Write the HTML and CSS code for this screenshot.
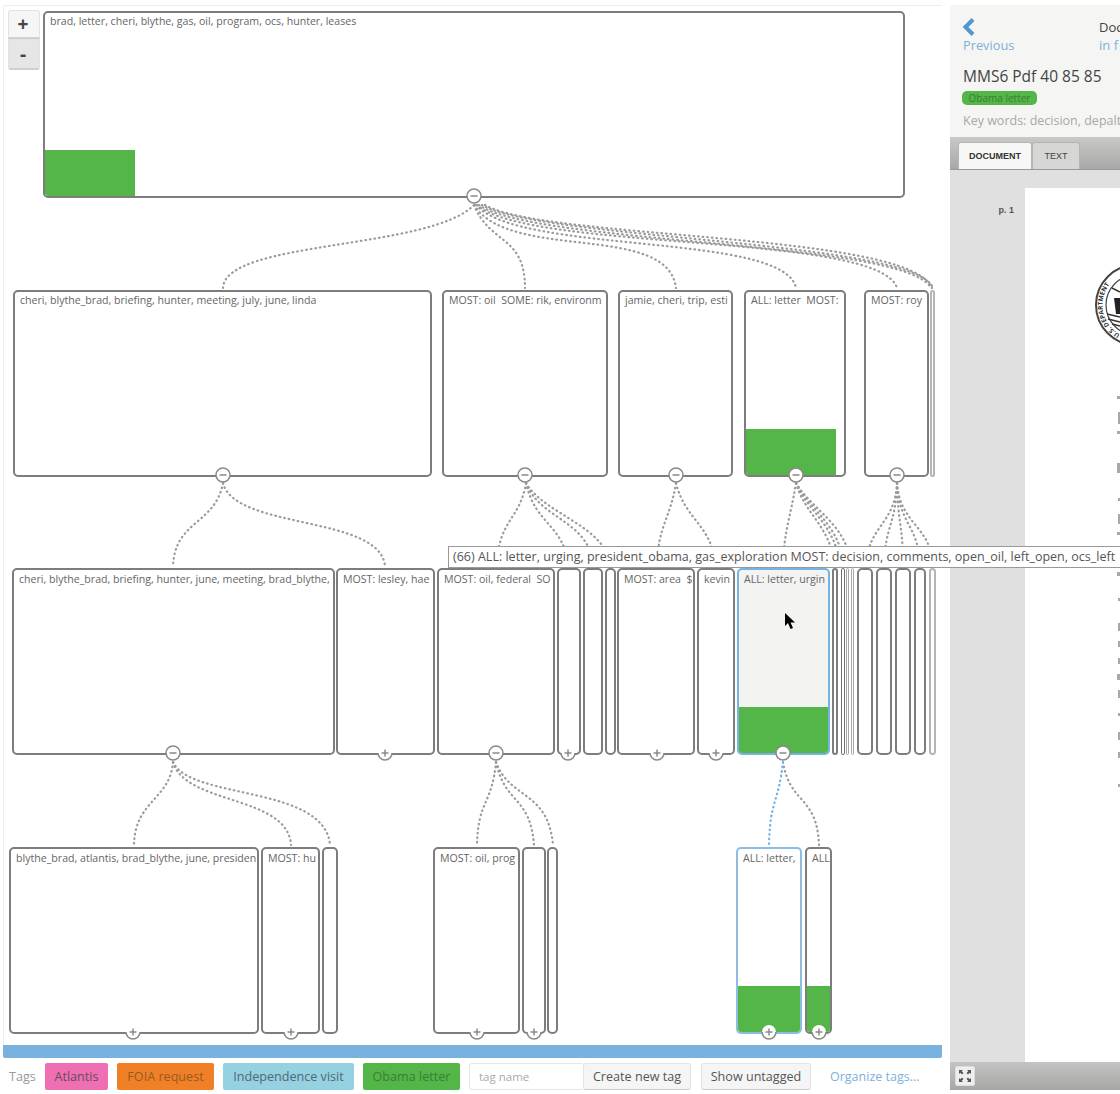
FILE: index.html
```html
<!DOCTYPE html>
<html lang="en">
<head>
    <meta charset="UTF-8">
    <title>Document tree</title>
    <link rel="stylesheet" href="styles.css">
</head>
<body>
<div class="app">
    <div class="left">
        <div class="tree">
            <div class="zoom-btns">
                <button class="zoom-btn" type="button">+</button>
                <button class="zoom-btn zoom-out" type="button">-</button>
            </div>

            <!-- svg uses page coordinates -->
            <svg class="links" width="939" height="1040" viewBox="3 5 939 1040">
                <g class="link">
                    <path d="M474 205 C430 250 225 240 223 288"/>
                    <path d="M474 205 C490 245 525 235 525 288"/>
                    <path d="M474 205 C510 262 668 222 676 288"/>
                    <path d="M476 205 C520 255 785 232 796 288"/>
                    <path d="M477 205 C530 252 880 232 897 288"/>
                    <path d="M479 205 C535 245 905 240 931 288"/>
                    <path d="M482 205 C540 240 915 240 933 288"/>
                    <path d="M485 205 C545 240 910 232 932 288"/>

                    <path d="M223 483 C215 525 175 520 173 566"/>
                    <path d="M223 483 C235 530 380 515 385 566"/>
                    <path d="M526 483 C520 520 498 520 497 566"/>
                    <path d="M526 483 C535 525 565 525 568 566"/>
                    <path d="M526 483 C540 520 590 520 593 566"/>
                    <path d="M526 483 C545 515 605 525 611 566"/>
                    <path d="M676 483 C670 520 658 525 657 566"/>
                    <path d="M676 483 C685 520 712 525 716 566"/>
                    <path d="M796 483 C790 520 784 530 783 566"/>
                    <path d="M796 483 C805 515 830 525 835 566"/>
                    <path d="M796 483 C808 512 836 525 840 566"/>
                    <path d="M796 483 C810 510 840 525 844 566"/>
                    <path d="M796 483 C812 510 848 525 851 566"/>
                    <path d="M897 483 C895 525 868 525 866 566"/>
                    <path d="M897 483 C896 525 885 525 884 566"/>
                    <path d="M897 483 C898 525 903 525 903 566"/>
                    <path d="M897 483 C899 525 919 525 920 566"/>
                    <path d="M897 483 C900 525 931 525 933 566"/>

                    <path d="M173 762 C170 800 135 800 134 845"/>
                    <path d="M173 762 C185 805 288 795 291 845"/>
                    <path d="M173 762 C190 800 325 785 330 845"/>
                    <path d="M496 762 C492 805 478 800 477 845"/>
                    <path d="M496 762 C505 805 530 795 534 845"/>
                    <path d="M496 762 C510 800 548 790 553 845"/>
                    <path d="M783 762 C790 805 817 795 819 845"/>
                </g>
                <path class="link-active" d="M783 762 C778 805 770 800 769 845"/>
            </svg>

            <div class="level level-0">
                <div class="node" style="left:41px;width:862px"><span class="label">brad, letter, cheri, blythe, gas, oil, program, ocs, hunter, leases</span><div class="fill" style="width:90px"></div></div>
            </div>

            <div class="level level-1">
                <div class="node" style="left:11px;width:419px"><span class="label">cheri, blythe_brad, briefing, hunter, meeting, july, june, linda</span></div>
                <div class="node" style="left:440px;width:166px"><span class="label">MOST: oil  SOME: rik, environm</span></div>
                <div class="node" style="left:616px;width:115px"><span class="label">jamie, cheri, trip, esti</span></div>
                <div class="node" style="left:742px;width:102px"><span class="label">ALL: letter  MOST:</span><div class="fill" style="width:90px"></div></div>
                <div class="node" style="left:862px;width:65px"><span class="label">MOST: roy</span></div>
                <div class="node sliver" style="left:928px;width:5px"></div>
            </div>

            <div class="level level-2">
                <div class="node" style="left:10px;width:323px"><span class="label">cheri, blythe_brad, briefing, hunter, june, meeting, brad_blythe,</span></div>
                <div class="node" style="left:334px;width:99px"><span class="label">MOST: lesley, hae</span></div>
                <div class="node" style="left:435px;width:118px"><span class="label">MOST: oil, federal  SO</span></div>
                <div class="node" style="left:555px;width:24px"></div>
                <div class="node" style="left:581px;width:20px"></div>
                <div class="node" style="left:603px;width:11px"></div>
                <div class="node" style="left:615px;width:78px"><span class="label">MOST: area  $</span></div>
                <div class="node" style="left:695px;width:38px"><span class="label">kevin</span></div>
                <div class="node selected" style="left:735px;width:93px"><span class="label">ALL: letter, urgin</span><div class="fill" style="width:100%"></div></div>
                <div class="node" style="left:830px;width:6px"></div>
                <div class="node thin dark" style="left:839px;width:4px"></div>
                <div class="node thin" style="left:844px;width:3px"></div>
                <div class="node thin" style="left:849px;width:3px"></div>
                <div class="node" style="left:855px;width:16px"></div>
                <div class="node" style="left:874px;width:16px"></div>
                <div class="node" style="left:893px;width:16px"></div>
                <div class="node" style="left:912px;width:12px"></div>
                <div class="node sliver" style="left:927px;width:7px"></div>
            </div>

            <div class="level level-3">
                <div class="node" style="left:7px;width:250px"><span class="label">blythe_brad, atlantis, brad_blythe, june, presiden</span></div>
                <div class="node" style="left:259px;width:59px"><span class="label">MOST: hu</span></div>
                <div class="node" style="left:320px;width:16px"></div>
                <div class="node" style="left:431px;width:87px"><span class="label">MOST: oil, prog</span></div>
                <div class="node" style="left:520px;width:24px"></div>
                <div class="node" style="left:545px;width:11px"></div>
                <div class="node selected-child" style="left:734px;width:66px"><span class="label">ALL: letter,</span><div class="fill" style="width:100%"></div></div>
                <div class="node" style="left:803px;width:27px"><span class="label">ALL</span><div class="fill" style="width:100%"></div></div>
            </div>

            <svg class="toggles" width="939" height="1040" viewBox="3 5 939 1040">
                <defs>
                    <g id="minus">
                        <circle r="7"/>
                        <path d="M-3.5 0H3.5"/>
                    </g>
                    <g id="plus">
                        <circle class="plain" r="7"/>
                        <path d="M-7 0A7 7 0 0 0 7 0M-3.5 0H3.5M0 -3.5V3.5"/>
                    </g>
                </defs>
                <use href="#minus" x="474" y="196"/>
                <use href="#minus" x="223" y="475"/>
                <use href="#minus" x="525" y="475"/>
                <use href="#minus" x="676" y="475"/>
                <use href="#minus" x="796" y="475"/>
                <use href="#minus" x="897" y="475"/>
                <use href="#minus" x="173" y="753"/>
                <use href="#plus" x="385" y="753"/>
                <use href="#minus" x="496" y="753"/>
                <use href="#plus" x="568" y="753"/>
                <use href="#plus" x="657" y="753"/>
                <use href="#plus" x="716" y="753"/>
                <use href="#minus" x="783" y="753"/>
                <use href="#plus" x="133" y="1032"/>
                <use href="#plus" x="291" y="1032"/>
                <use href="#plus" x="477" y="1032"/>
                <use href="#plus" x="534" y="1032"/>
                <use href="#plus" x="769" y="1032"/>
                <use href="#plus" x="819" y="1032"/>
            </svg>

            <div class="tooltip">(66) ALL: letter, urging, president_obama, gas_exploration MOST: decision, comments, open_oil, left_open, ocs_left</div>

            <svg class="cursor" width="12" height="18" viewBox="0 0 12 18">
                <path d="M1 0V13L4 10L6.5 16L9 15L6.5 9.5H11Z"/>
            </svg>
        </div>

        <div class="progress"></div>

        <div class="tags">
            <span class="tags-title">Tags</span>
            <span class="tag tag-atlantis">Atlantis</span>
            <span class="tag tag-foia">FOIA request</span>
            <span class="tag tag-visit">Independence visit</span>
            <span class="tag tag-obama">Obama letter</span>
            <div class="new-tag">
                <input class="tag-input" type="text" placeholder="tag name">
                <button class="btn btn-create" type="button">Create new tag</button>
            </div>
            <button class="btn btn-untagged" type="button">Show untagged</button>
            <a class="organize" href="#">Organize tags...</a>
        </div>
    </div>

    <div class="right">
        <div class="doc-header">
            <div class="doc-nav">
                <a class="prev" href="#">
                    <svg width="14" height="18" viewBox="0 0 14 18"><path d="M11 1.5L3.5 9L11 16.5"/></svg>
                    <span>Previous</span>
                </a>
                <div class="doc-where">
                    <div class="doc-count">Doc</div>
                    <a href="#">in f</a>
                </div>
            </div>
            <h1 class="doc-title">MMS6 Pdf 40 85 85</h1>
            <span class="doc-tag">Obama letter</span>
            <p class="keywords">Key words: decision, depalt</p>
        </div>

        <div class="tabbar">
            <span class="tab tab-active">DOCUMENT</span>
            <span class="tab">TEXT</span>
        </div>

        <div class="viewer">
            <div class="page-no">p. 1</div>
            <div class="page">
                <svg class="page-scan" width="95" height="874" viewBox="1025 188 95 874">
                    <g class="seal">
                        <circle cx="1136" cy="305" r="40"/>
                        <circle class="thin" cx="1136" cy="305" r="30"/>
                        <path id="seal-arc" class="none" d="M1120 334.4A33.5 33.5 0 0 1 1120 275.6"/>
                        <text font-size="6.5" font-weight="700"><textPath href="#seal-arc">U.S. DEPARTMENT</textPath></text>
                        <path class="solid" d="M1114 298H1120V314H1116Z"/>
                        <path class="stripe" d="M1107 314L1120 317M1108 319L1120 322M1112 324L1120 326M1112 288L1120 292"/>
                    </g>
                    <g class="scan-lines">
                        <rect x="1117" y="396" width="3" height="3"/>
                        <rect x="1118" y="412" width="2" height="12"/>
                        <rect x="1117" y="431" width="3" height="3"/>
                        <rect x="1117" y="463" width="3" height="10"/>
                        <rect x="1118" y="498" width="2" height="3"/>
                        <rect x="1118" y="514" width="2" height="10"/>
                        <rect x="1117" y="532" width="3" height="3"/>
                        <rect x="1117" y="572" width="3" height="4"/>
                        <rect x="1118" y="598" width="2" height="3"/>
                        <rect x="1118" y="623" width="2" height="8"/>
                        <rect x="1118" y="641" width="2" height="6"/>
                        <rect x="1118" y="658" width="2" height="6"/>
                        <rect x="1117" y="674" width="3" height="6"/>
                        <rect x="1118" y="690" width="2" height="8"/>
                        <rect x="1118" y="713" width="2" height="3"/>
                        <rect x="1118" y="732" width="2" height="8"/>
                        <rect x="1118" y="752" width="2" height="6"/>
                        <rect x="1118" y="784" width="2" height="3"/>
                    </g>
                </svg>
            </div>
        </div>

        <div class="viewer-foot">
            <button class="fullscreen" type="button">
                <svg width="16" height="16" viewBox="0 0 16 16"><path d="M2 6V2H6L4.7 3.3L6.5 5L5 6.5L3.3 4.7ZM14 6V2H10L11.3 3.3L9.5 5L11 6.5L12.7 4.7ZM2 10V14H6L4.7 12.7L6.5 11L5 9.5L3.3 11.3ZM14 10V14H10L11.3 12.7L9.5 11L11 9.5L12.7 11.3Z"/></svg>
            </button>
        </div>
    </div>
</div>
</body>
</html>
```

FILE: styles.css
```css
html,
body {
    margin: 0;
    height: 1094px;
    overflow: hidden;
    background-color: #fff;
}

body {
    font-family: "Open Sans", "Liberation Sans", sans-serif;
    color: #555;
}

.app {
    display: flex;
    padding-top: 5px;
}

.left {
    width: 939px;
    margin-left: 3px;
    flex-shrink: 0;
}

.tree {
    position: relative;
    height: 1040px;
    box-sizing: border-box;
    border-top: 1px solid #eee;
    border-left: 1px solid #eee;
}

.links,
.toggles {
    position: absolute;
    left: -1px;
    top: -1px;
}

.link path,
.link-active {
    fill: none;
    stroke: #9b9b9b;
    stroke-width: 2.2;
    stroke-linecap: round;
    stroke-dasharray: 0.6 4;
}

.link-active {
    stroke: #77b2e0;
}

.toggles circle {
    fill: #fff;
    stroke: #8a8a8a;
    stroke-width: 1.5;
}

.toggles circle.plain {
    stroke: none;
}

.toggles path {
    fill: none;
    stroke: #8a8a8a;
    stroke-width: 1.5;
}

.zoom-btns {
    position: absolute;
    left: 4px;
    top: 4px;
    z-index: 2;
    display: flex;
    flex-direction: column;
}

.zoom-btn {
    width: 32px;
    height: 29px;
    padding: 0 2px 0 0;
    border: 1px solid #e2e2e2;
    border-bottom: 2px solid #d0d0d0;
    border-radius: 3px 3px 0 0;
    background-color: #f6f6f6;
    font-family: "Open Sans", sans-serif;
    font-size: 19px;
    font-weight: 700;
    color: #444;
}

.zoom-out {
    height: 31px;
    border-radius: 0 0 3px 3px;
    background-color: #e6e6e6;
}

.level {
    position: absolute;
    left: -2px;
    width: 100%;
    height: 187px;
}

.level-0 { top: 5px; }
.level-1 { top: 284px; }
.level-2 { top: 562px; }
.level-3 { top: 841px; }

.node {
    position: absolute;
    top: 0;
    height: 100%;
    box-sizing: border-box;
    overflow: hidden;
    border: 2px solid #7d7d7d;
    border-radius: 5px;
    background-color: #fff;
}

.node.sliver {
    border-color: #b5b5b5;
}

.node.thin {
    border-width: 1px;
    border-color: #a5a5a5;
}

.node.thin.dark {
    border-color: #6f6f6f;
}

.node.selected {
    border-color: #77b2e0;
    background-color: #f3f3f2;
}

.node.selected-child {
    border-color: #8dbde3;
}

.label {
    display: block;
    padding: 1px 0 0 5px;
    font-size: 10.6px;
    line-height: 15px;
    white-space: pre;
    color: #666;
}

.level-2 .label,
.level-3 .label {
    padding-top: 2px;
}

.fill {
    position: absolute;
    left: 0;
    bottom: 0;
    height: 46px;
    background-color: #54b548;
}

.tooltip {
    position: absolute;
    left: 444px;
    top: 540px;
    z-index: 5;
    width: 720px;
    height: 22px;
    box-sizing: border-box;
    padding-left: 4px;
    border: 1px solid #999;
    background-color: #fff;
    font-size: 12.53px;
    line-height: 20px;
    white-space: nowrap;
    color: #555;
}

.cursor {
    position: absolute;
    left: 780px;
    top: 607px;
    z-index: 4;
}

.progress {
    height: 13px;
    border-radius: 0 0 2px 2px;
    background-color: #77b2e0;
}

.tags {
    display: flex;
    align-items: center;
    height: 28px;
    margin-top: 4px;
    padding-left: 6px;
    font-size: 12.6px;
}

.tags-title {
    width: 36px;
    color: #999;
}

.tag {
    display: flex;
    align-items: center;
    justify-content: center;
    height: 27px;
    margin-right: 9px;
    border-radius: 2px;
}

.tag-atlantis {
    width: 63px;
    background-color: #ee6fb2;
    color: #6a4a60;
}

.tag-foia {
    width: 97px;
    background-color: #f08028;
    color: #9a5a20;
}

.tag-visit {
    width: 131px;
    background-color: #96d1e2;
    color: #4c6a72;
}

.tag-obama {
    width: 97px;
    background-color: #54b548;
    color: #3a7f35;
}

.new-tag {
    display: flex;
    margin-right: 10px;
}

.tag-input {
    width: 114px;
    height: 27px;
    box-sizing: border-box;
    padding: 0 9px;
    border: 1px solid #e6e6e6;
    border-right: none;
    border-radius: 3px 0 0 3px;
    font-family: "Open Sans", sans-serif;
    font-size: 11.5px;
}

.tag-input::placeholder {
    color: #aaa;
}

.btn {
    height: 27px;
    padding: 0;
    border: 1px solid #e4e4e4;
    border-bottom-color: #ccc;
    border-radius: 3px;
    background-color: #f5f5f5;
    font-family: "Open Sans", sans-serif;
    font-size: 12.6px;
    color: #555;
}

.btn-create {
    width: 108px;
}

.btn-untagged {
    width: 110px;
}

.organize {
    margin-left: 19px;
    font-size: 12.5px;
    color: #7fb0dc;
    text-decoration: none;
}

.right {
    width: 170px;
    height: 1085px;
    margin-left: 8px;
    flex-shrink: 0;
    overflow: hidden;
    display: flex;
    flex-direction: column;
    background-color: #f5f5f3;
    border-radius: 4px 0 0 0;
}

.doc-header {
    height: 132px;
    box-sizing: border-box;
    padding: 13px 0 0 13px;
}

.doc-nav {
    display: flex;
    width: 260px;
}

.prev {
    display: block;
    width: 136px;
    font-size: 12.8px;
    line-height: 16px;
    color: #7fb0dc;
    text-decoration: none;
}

.prev svg {
    display: block;
    margin-left: -1px;
    fill: none;
    stroke: #4f97d0;
    stroke-width: 4;
}

.prev span {
    display: block;
    margin-top: 1px;
}

.doc-where {
    font-size: 13px;
    line-height: 18px;
}

.doc-where a {
    color: #7fb0dc;
    text-decoration: none;
}

.doc-count {
    color: #444;
    white-space: nowrap;
}

.doc-title {
    margin: 12px 0 0;
    font-size: 15.5px;
    font-weight: 400;
    line-height: 21px;
    white-space: nowrap;
    color: #444;
}

.doc-tag {
    display: block;
    width: 75px;
    height: 14px;
    margin: 4px 0 0 -1px;
    border-radius: 5px;
    background-color: #54b548;
    font-size: 10px;
    line-height: 14px;
    text-align: center;
    color: #3a7f35;
}

.keywords {
    margin: 7px 0 0;
    font-size: 12.5px;
    line-height: 18px;
    white-space: nowrap;
    color: #a8a8a8;
}

.tabbar {
    display: flex;
    align-items: flex-end;
    height: 33px;
    box-sizing: border-box;
    padding-left: 8px;
    background: linear-gradient(#c9c9c7, #a8a8a6);
    border-bottom: 1px solid #999;
}

.tab {
    display: flex;
    align-items: center;
    justify-content: center;
    width: 48px;
    height: 27px;
    box-sizing: border-box;
    border-radius: 3px 3px 0 0;
    border: 1px solid #b5b5b5;
    border-bottom: none;
    background-color: #d6d6d4;
    font-family: "Liberation Sans", sans-serif;
    font-size: 9px;
    color: #444;
}

.tab-active {
    width: 74px;
    background-color: #f7f7f5;
    font-weight: 700;
    color: #333;
}

.viewer {
    display: flex;
    height: 892px;
    box-sizing: border-box;
    padding-top: 18px;
    background-color: #e0e0e0;
}

.page-no {
    width: 64px;
    padding-top: 17px;
    padding-right: 11px;
    font-family: "Liberation Sans", sans-serif;
    font-size: 9px;
    font-weight: 700;
    text-align: right;
    color: #555;
}

.page {
    flex: 1;
    background-color: #fff;
}

.page-scan {
    display: block;
}

.seal circle {
    fill: #fff;
    stroke: #444;
    stroke-width: 2;
}

.seal circle.thin {
    stroke-width: 1.2;
}

.seal text {
    fill: #333;
}

.seal .none {
    fill: none;
    stroke: none;
}

.seal .solid {
    fill: #222;
}

.seal .stripe {
    fill: none;
    stroke: #333;
    stroke-width: 1.5;
}

.scan-lines rect {
    fill: #a8a8a8;
}

.viewer-foot {
    display: flex;
    align-items: center;
    height: 28px;
    padding-left: 5px;
    background: linear-gradient(#c4c4c2, #a6a6a4);
}

.fullscreen {
    display: flex;
    align-items: center;
    justify-content: center;
    width: 20px;
    height: 20px;
    padding: 0;
    border: 1px solid #ddd;
    border-radius: 2px;
    background-color: #eee;
}

.fullscreen svg {
    fill: #555;
}
```
